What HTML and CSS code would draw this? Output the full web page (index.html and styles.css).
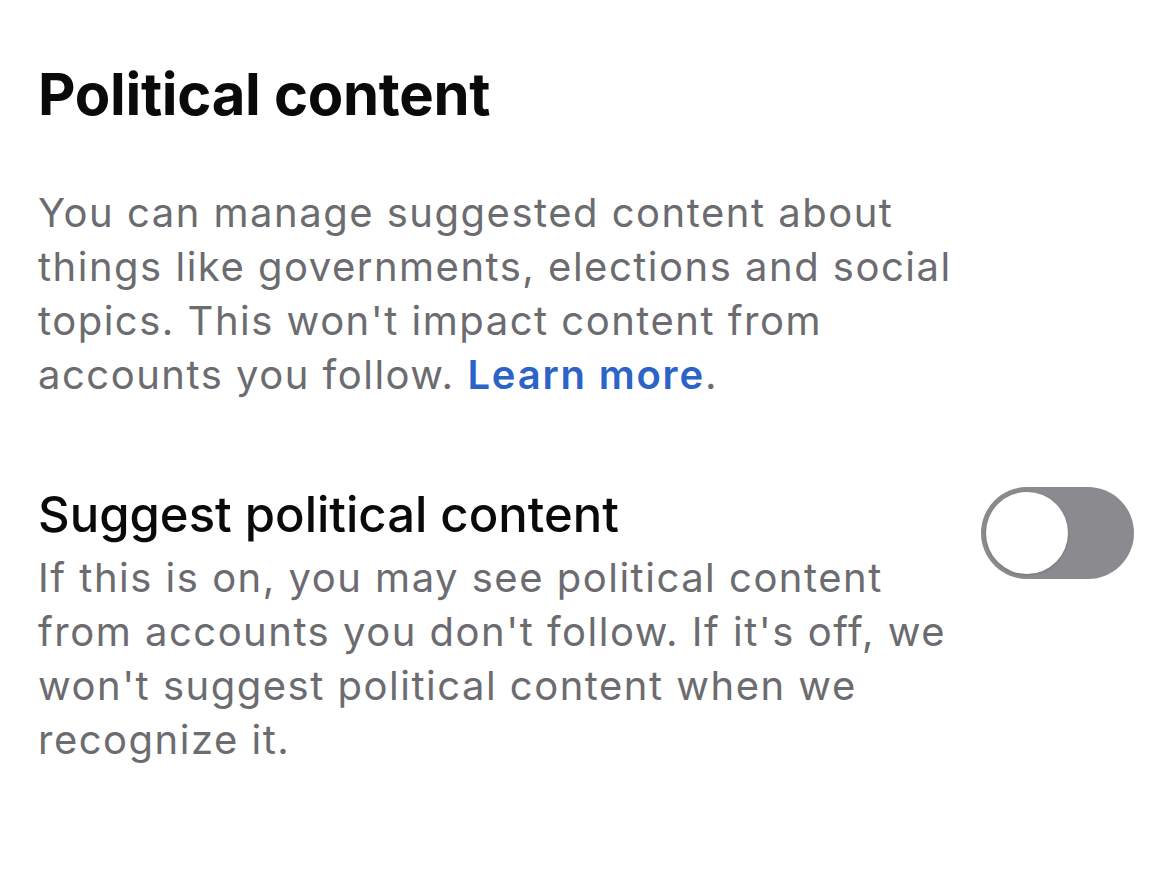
FILE: index.html
```html
<!DOCTYPE html>
<html>
<head>
<meta charset="utf-8">
<link rel="stylesheet" href="styles.css">
</head>
<body>
<main class="page">
  <h1 class="title">Political content</h1>
  <p class="intro">You can manage suggested content about things like governments, elections and social topics. This won't impact content from accounts you follow. <a class="link" href="#">Learn more</a>.</p>
  <section class="setting">
    <div class="setting-text">
      <h2 class="setting-title">Suggest political content</h2>
      <p class="setting-desc">If this is on, you may see political content from accounts you don't follow. If it's off, we won't suggest political content when we recognize it.</p>
    </div>
    <div class="toggle" role="switch" aria-checked="false"><span class="knob"></span></div>
  </section>
</main>
</body>
</html>
```
FILE: styles.css
```css
html, body {
  margin: 0;
  padding: 0;
  background: #ffffff;
}
.page {
  font-family: Inter, "Liberation Sans", sans-serif;
  padding: 58px 36px 0 38px;
}
.title {
  margin: 0;
  font-size: 58px;
  font-weight: 700;
  line-height: 72px;
  color: #0a0a0a;
  letter-spacing: -0.3px;
}
.intro {
  margin: 56px 0 0 0;
  width: 945px;
  font-size: 40px;
  line-height: 54px;
  color: #6c6c70;
  letter-spacing: 1.5px;
}
.link {
  color: #2c63c8;
  font-weight: 600;
  letter-spacing: 1.8px;
  text-decoration: none;
}
.setting {
  display: flex;
  justify-content: space-between;
  align-items: flex-start;
  margin-top: 85px;
}
.setting-text {
  width: 920px;
}
.setting-title {
  margin: 0;
  font-size: 49px;
  font-weight: 500;
  line-height: 56px;
  color: #0a0a0a;
}
.setting-desc {
  margin: 8px 0 0 0;
  font-size: 40px;
  line-height: 54px;
  color: #6c6c70;
  letter-spacing: 1.5px;
}
.toggle {
  flex: none;
  width: 153px;
  height: 92px;
  margin-top: 0;
  border-radius: 46px;
  background: #8a8a8f;
  display: flex;
  align-items: center;
  padding-left: 5px;
  box-sizing: border-box;
}
.knob {
  width: 82px;
  height: 82px;
  border-radius: 50%;
  background: #ffffff;
  box-shadow: 0 1px 3px rgba(0,0,0,0.15);
}
```
